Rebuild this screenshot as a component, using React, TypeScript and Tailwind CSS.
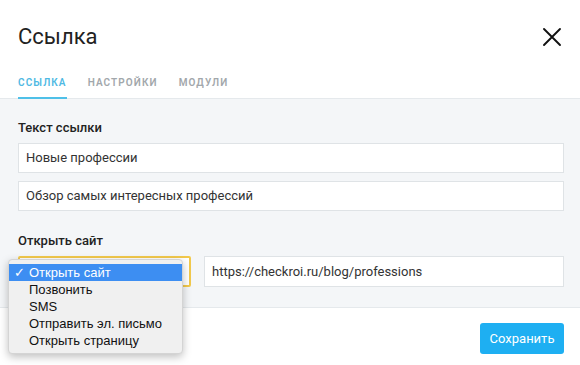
const options = ["Открыть сайт", "Позвонить", "SMS", "Отправить эл. письмо", "Открыть страницу"];

export default function App() {
  return (
    <div className="relative w-[580px] h-[365px] overflow-hidden bg-white font-['Roboto',sans-serif] text-[#333]">
      {/* Header */}
      <div className="border-b border-[#e5e9ec]">
        <div className="flex items-start justify-between pl-[18px] pr-[18px] pt-[23px]">
          <h1 className="text-[22px] leading-[28px] font-normal text-[#222]">Ссылка</h1>
          <svg className="mt-[4px]" width="20" height="20" viewBox="0 0 20 20" fill="none" stroke="#111" strokeWidth="1.9" strokeLinecap="round">
            <path d="M2 2 L18 18 M18 2 L2 18" />
          </svg>
        </div>
        <div className="mt-[26px] flex gap-[21px] pl-[18px] text-[10px] font-semibold tracking-[1.1px] leading-[12px]">
          <div className="-mb-px border-b-2 border-[#4fc0e8] pb-[8px] text-[#4fb9e3]">ССЫЛКА</div>
          <div className="pb-[8px] text-[#a2a7ab]">НАСТРОЙКИ</div>
          <div className="pb-[8px] text-[#a2a7ab]">МОДУЛИ</div>
        </div>
      </div>

      {/* Body */}
      <div className="bg-[#f4f6f8] pl-[18px] pr-[16px] pt-[21px] pb-[20px] border-b border-[#e5e9ec]">
        <div className="text-[13px] leading-[16px] font-medium text-[#222] mb-[7px]">Текст ссылки</div>
        <div className="flex flex-col gap-[8px]">
          <div className="h-[30px] flex items-center border border-[#dfe3e6] bg-white px-[7px] text-[13px]">
            Новые профессии
          </div>
          <div className="h-[30px] flex items-center border border-[#dfe3e6] bg-white px-[7px] text-[13px]">
            Обзор самых интересных профессий
          </div>
        </div>
        <div className="mt-[22px] text-[13px] leading-[16px] font-medium text-[#222] mb-[7px]">Открыть сайт</div>
        <div className="flex gap-[13px]">
          <div className="h-[31px] w-[173px] border-2 border-[#f2c94c] bg-white rounded-[2px]"></div>
          <div className="h-[31px] flex-1 flex items-center border border-[#dfe3e6] bg-white px-[7px] text-[13px]">
            https://checkroi.ru/blog/professions
          </div>
        </div>
      </div>

      {/* Footer */}
      <div className="flex justify-end pr-[16px] pt-[15px]">
        <button className="h-[31px] w-[84px] rounded-[3px] bg-[#1eaff2] text-[13px] text-white">Сохранить</button>
      </div>

      {/* Native select menu */}
      <div className="absolute left-[8px] top-[259px] w-[175px] rounded-[4px] border border-[#d4d4d4] bg-[#f0f0f0] py-[4px] shadow-[0_3px_8px_rgba(0,0,0,0.25)] font-['Liberation_Sans',sans-serif] text-[13px] leading-[17px] text-[#111]">
        {options.map((o, i) => (
          <div key={o} className={i === 0 ? "flex bg-[#3d8ef2] text-white" : "flex"}>
            <span className="w-[20px] pl-[5px]">{i === 0 ? "✓" : ""}</span>
            <span>{o}</span>
          </div>
        ))}
      </div>
    </div>
  );
}
